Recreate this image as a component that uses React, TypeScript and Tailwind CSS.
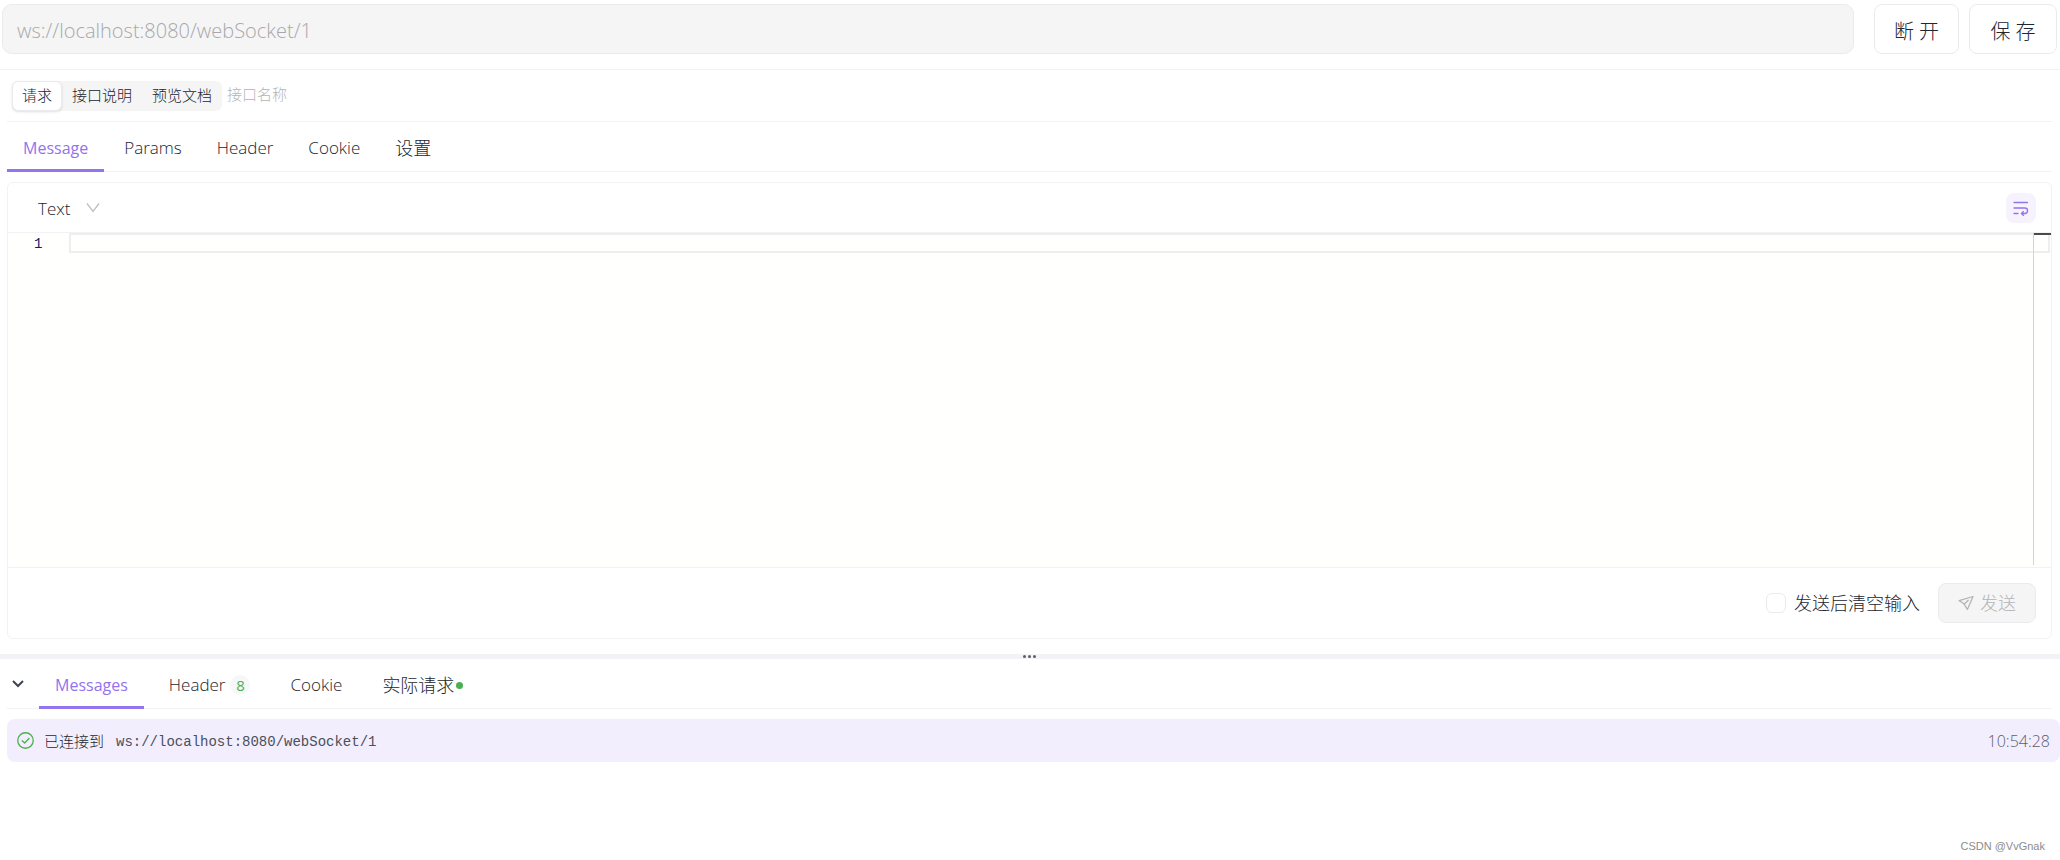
import { useState } from "react";
import type { ReactNode } from "react";
import clsx from "clsx";

const WS_URL = "ws://localhost:8080/webSocket/1";

const modes = ["请求", "接口说明", "预览文档"];

type Tab = { key: string; label: ReactNode };

const requestTabs: Tab[] = [
  { key: "message", label: "Message" },
  { key: "params", label: "Params" },
  { key: "header", label: "Header" },
  { key: "cookie", label: "Cookie" },
  { key: "settings", label: <span className="text-[18px]">设置</span> },
];

const responseTabs: Tab[] = [
  { key: "messages", label: "Messages" },
  {
    key: "header",
    label: (
      <>
        Header
        <span className="ml-[5px] flex size-5 items-center justify-center rounded-full bg-[#f7f7f8] text-[15px] font-normal text-[#4caf50]">
          8
        </span>
      </>
    ),
  },
  { key: "cookie", label: "Cookie" },
  {
    key: "actual",
    label: (
      <>
        <span className="text-[18px]">实际请求</span>
        <span className="ml-0.5 size-[7px] rounded-full bg-[#4caf50]" />
      </>
    ),
  },
];

const Tabs = ({
  items,
  className,
}: {
  items: Tab[];
  className?: string;
}) => {
  const [active, setActive] = useState(items[0].key);

  return (
    <div role="tablist" className={clsx("-mb-px flex h-[50px]", className)}>
      {items.map(({ key, label }) => (
        <button
          key={key}
          type="button"
          role="tab"
          aria-selected={active === key}
          onClick={() => setActive(key)}
          className={clsx(
            "flex items-center border-b-[3px] pt-[5px]",
            active === key
              ? "border-[#9373ee] px-4 text-[16px] font-normal text-[#9373ee]"
              : "border-transparent px-[15px] text-[17px]"
          )}
        >
          {label}
        </button>
      ))}
    </div>
  );
};

const WrapIcon = () => (
  <svg
    width="16"
    height="16"
    viewBox="0 0 16 16"
    fill="none"
    stroke="currentColor"
    strokeWidth="1.3"
    strokeLinecap="round"
    strokeLinejoin="round"
  >
    <path d="M1 2.5h13.5M1 8h10.8a2.7 2.7 0 0 1 0 5.5H9M1 13.5h4M10.5 11.6L8.4 13.5l2.1 1.9" />
  </svg>
);

const PlaneIcon = () => (
  <svg
    width="16"
    height="16"
    viewBox="0 0 16 16"
    fill="none"
    stroke="currentColor"
    strokeWidth="1.3"
    strokeLinecap="round"
    strokeLinejoin="round"
  >
    <path d="M15 1.5L1.2 5.7l4.2 2.6 1 1.4 3 4.8zM6.2 9.2l4-4" />
  </svg>
);

const CheckIcon = () => (
  <svg
    width="17"
    height="17"
    viewBox="0 0 16 16"
    fill="none"
    stroke="currentColor"
    strokeWidth="1.2"
    strokeLinecap="round"
    strokeLinejoin="round"
  >
    <circle cx="8" cy="8" r="7.3" />
    <path d="M4.9 8.2l2.3 2.2 4.1-4.3" />
  </svg>
);

const UrlBar = () => (
  <header className="flex gap-2.5 border-b border-[#f2f2f4] pt-1 pr-[3px] pb-[15px] pl-0.5">
    <input
      aria-label="URL"
      disabled
      value={WS_URL}
      className="mr-2.5 h-[50px] min-w-0 flex-1 rounded-[10px] border border-[#ebebef] bg-[#f5f5f5] px-3.5 pt-0.5 text-[20px] text-[#a8a8ac]"
    />
    <button
      type="button"
      className="h-[50px] w-[85px] rounded-lg border border-[#ebebef] pt-1.5 text-[20px]"
    >
      断 开
    </button>
    <button
      type="button"
      className="h-[50px] w-[88px] rounded-lg border border-[#ebebef] pt-1.5 text-[20px]"
    >
      保 存
    </button>
  </header>
);

const ModeBar = () => {
  const [mode, setMode] = useState(modes[0]);

  return (
    <div className="flex items-center border-b border-[#f2f2f4] pt-[11px] pr-2 pb-2.5 pl-[5px] text-[15px]">
      <div className="flex h-[30px] rounded-md bg-[#f5f5f5]">
        {modes.map((item) => (
          <button
            key={item}
            type="button"
            aria-pressed={mode === item}
            onClick={() => setMode(item)}
            className={clsx(
              "rounded-md border px-[9px] pb-0.5",
              mode === item
                ? "border-[#ebebef] bg-white shadow-sm"
                : "border-transparent"
            )}
          >
            {item}
          </button>
        ))}
      </div>
      <input
        aria-label="接口名称"
        placeholder="接口名称"
        className="ml-[5px] min-w-0 flex-1 pb-1 outline-none placeholder:text-[#b4b4b8]"
      />
    </div>
  );
};

const Editor = () => {
  const [text, setText] = useState("");

  return (
    <section className="mt-2.5 rounded-md border border-[#f2f2f4]">
      <div className="flex h-[50px] items-center justify-between border-b border-[#f2f2f4] pr-[15px] pl-[30px]">
        <div className="relative flex items-center">
          <select
            aria-label="格式"
            className="w-[62px] appearance-none bg-transparent pt-0.5 text-[17px] outline-none"
          >
            <option>Text</option>
            <option>JSON</option>
            <option>XML</option>
          </select>
          <svg
            className="pointer-events-none absolute right-0"
            width="14"
            height="10"
            viewBox="0 0 14 10"
            fill="none"
            stroke="#bfbfc3"
            strokeWidth="1.3"
          >
            <path d="M1 0.5l6 8 6-8" />
          </svg>
        </div>
        <button
          type="button"
          aria-label="自动换行"
          className="flex size-[30px] items-center justify-center rounded-lg bg-[#f6f3fe] text-[#9373ee]"
        >
          <WrapIcon />
        </button>
      </div>
      <div className="relative flex h-[334px] bg-[#fffffe] font-['Liberation_Mono','Noto_Sans_CJK_SC',monospace] text-[14px] leading-5">
        <span className="w-[61px] shrink-0 pt-px pl-[26px] text-[#0b216f]">
          1
        </span>
        <textarea
          aria-label="Message"
          value={text}
          onChange={(e) => setText(e.target.value)}
          className="min-w-0 flex-1 resize-none bg-transparent outline-none"
        />
        {/* active line and overview ruler */}
        <div className="pointer-events-none absolute top-0 right-px left-[61px] h-5 border-2 border-[#eeeeee]" />
        <div className="pointer-events-none absolute top-0 right-0 h-[332px] w-[18px] border-l border-[#d4d4d4]">
          <div className="h-0.5 bg-[#4a4a4a]" />
        </div>
      </div>
      <div className="flex h-[71px] items-center justify-end border-t border-[#f2f2f4] pr-[15px]">
        <label className="mr-[18px] flex items-center gap-2">
          <input
            type="checkbox"
            className="size-5 appearance-none rounded-md border border-[#ebebef] checked:border-[#9373ee] checked:bg-[#9373ee]"
          />
          发送后清空输入
        </label>
        <button
          type="button"
          disabled
          className="flex h-10 w-[98px] items-center justify-center gap-1.5 rounded-lg border border-[#ebebef] bg-[#f5f5f5] text-[#b4b4b8]"
        >
          <PlaneIcon />
          发送
        </button>
      </div>
    </section>
  );
};

const App = () => {
  return (
    <div className="flex min-h-screen flex-col bg-white font-['Open_Sans','Noto_Sans_CJK_SC',sans-serif] text-[18px] leading-6 font-light text-[#22262f]">
      <UrlBar />
      <main className="pr-2 pl-[7px]">
        <ModeBar />
        <div className="border-b border-[#f2f2f4]">
          <Tabs items={requestTabs} className="gap-[5px]" />
        </div>
        <Editor />
      </main>

      <div className="mt-[15px] flex h-[5px] items-center justify-center gap-0.5 bg-[#f2f2f7] pr-0.5">
        <span className="size-[3px] rounded-full bg-[#5a606b]" />
        <span className="size-[3px] rounded-full bg-[#5a606b]" />
        <span className="size-[3px] rounded-full bg-[#5a606b]" />
      </div>

      <section className="pl-[7px]">
        <div className="mr-2 flex border-b border-[#f2f2f4]">
          <button
            type="button"
            aria-label="收起"
            className="flex w-8 items-center pl-[5px] text-[#3f4551]"
          >
            <svg
              width="12"
              height="8"
              viewBox="0 0 12 8"
              fill="none"
              stroke="currentColor"
              strokeWidth="2"
            >
              <path d="M1 1l5 5 5-5" />
            </svg>
          </button>
          <Tabs items={responseTabs} className="gap-2.5" />
        </div>
        <div className="mt-2.5 flex h-[43px] items-center rounded-lg bg-[#f2eefd] px-2.5">
          <span className="mr-2.5 text-[#4caf50]">
            <CheckIcon />
          </span>
          <span className="text-[15px]">已连接到</span>
          <span className="ml-3 flex-1 pt-0.5 font-['Liberation_Mono',monospace] text-[14px] text-[#4a505c]">
            {WS_URL}
          </span>
          <time className="text-[16px] text-[#5c606a]">10:54:28</time>
        </div>
      </section>

      <footer className="mt-auto pr-[15px] pb-0.5 text-right font-['Liberation_Sans',sans-serif] text-[11px] text-[#8c8c8c]">
        CSDN @VvGnak
      </footer>
    </div>
  );
};

export default App;
